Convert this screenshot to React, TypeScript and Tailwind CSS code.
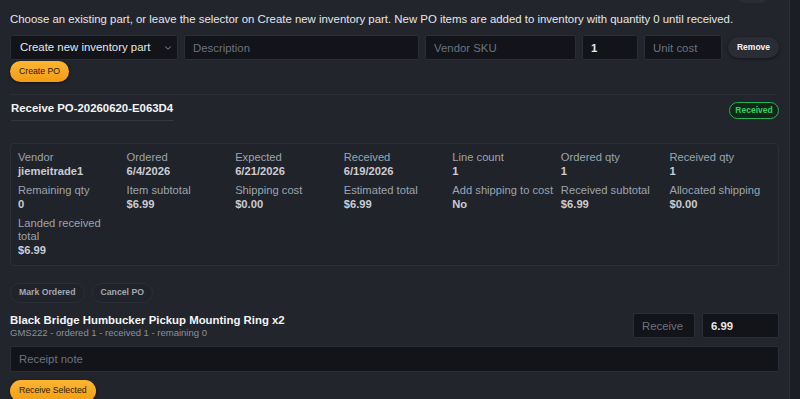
import { ChevronDown } from 'lucide-react';

const fields: { label: string; value: string }[] = [
  { label: 'Vendor', value: 'jiemeitrade1' },
  { label: 'Ordered', value: '6/4/2026' },
  { label: 'Expected', value: '6/21/2026' },
  { label: 'Received', value: '6/19/2026' },
  { label: 'Line count', value: '1' },
  { label: 'Ordered qty', value: '1' },
  { label: 'Received qty', value: '1' },
  { label: 'Remaining qty', value: '0' },
  { label: 'Item subtotal', value: '$6.99' },
  { label: 'Shipping cost', value: '$0.00' },
  { label: 'Estimated total', value: '$6.99' },
  { label: 'Add shipping to cost', value: 'No' },
  { label: 'Received subtotal', value: '$6.99' },
  { label: 'Allocated shipping', value: '$0.00' },
  { label: 'Landed received total', value: '$6.99' },
];

const inputCls =
  'h-[25px] rounded-[2px] border border-[#2b2e36] bg-[#121419] px-[8px] text-[11.4px] text-[#e5e7eb] placeholder:text-[#6b7280] outline-none';

function Pill({ children }: { children: React.ReactNode }) {
  return (
    <button className="flex h-[20px] items-center rounded-full border border-[#2c2f37] bg-[#20232a] px-[8px] text-[8.7px] font-bold text-[#a3a8b3]">
      {children}
    </button>
  );
}

function OrangeButton({ children, className = '' }: { children: React.ReactNode; className?: string }) {
  return (
    <button
      className={`flex items-center rounded-full bg-gradient-to-b from-[#fbb631] to-[#f39c12] px-[9px] text-[8.7px] font-medium text-[#2a1a00] shadow-[0_1px_3px_rgba(0,0,0,0.5)] ${className}`}
    >
      {children}
    </button>
  );
}

export default function App() {
  return (
    <div className="flex h-[399px] w-[800px] overflow-hidden bg-[#1b1e24] font-['Liberation_Sans',Arial,sans-serif]">
      <div className="w-[790px] shrink-0 border-r border-[#2e3139] bg-[#22252c] px-[10px]">
        <div className="flex justify-end">
          <div className="-mt-[19px] mr-[8px] h-[22px] w-[36px] rounded-full bg-[#2a2d35]" />
        </div>

        <p className="mt-[9px] text-[11.4px] leading-[15px] text-[#e5e7eb]">
          Choose an existing part, or leave the selector on Create new inventory part. New PO items are added to
          inventory with quantity 0 until received.
        </p>

        <div className="mt-[8px] flex gap-[6px]">
          <div className={`${inputCls} flex w-[168px] items-center justify-between pl-[9px] pr-[4px]`}>
            <span>Create new inventory part</span>
            <ChevronDown size={10} className="text-[#9ca3af]" />
          </div>
          <input className={`${inputCls} w-[235px]`} placeholder="Description" />
          <input className={`${inputCls} w-[151px]`} placeholder="Vendor SKU" />
          <input className={`${inputCls} w-[56px] font-bold`} defaultValue="1" />
          <input className={`${inputCls} w-[78px]`} placeholder="Unit cost" />
          <button className="my-[2px] h-[21px] flex-1 rounded-full bg-[#2a2d35] text-[8.5px] font-bold text-[#f3f4f6] shadow-[0_1px_3px_rgba(0,0,0,0.5)]">
            Remove
          </button>
        </div>

        <OrangeButton className="mt-[1px] h-[21px]">Create PO</OrangeButton>

        <div className="mr-[2px] mt-[12px] border-t border-[#2c2f37]" />

        <div className="mt-[6px] flex items-start justify-between">
          <h3 className="ml-[1px] border-b border-[#34373f] pb-[4px] pr-[1px] text-[11.4px] font-bold leading-[15px] text-[#f3f4f6]">
            Receive PO-20260620-E063D4
          </h3>
          <span className="mt-[1px] flex h-[17px] w-[50px] items-center justify-center rounded-full border-[1.5px] border-[#22b455] bg-[#13261a] text-[8.5px] font-bold text-[#2fd35f]">
            Received
          </span>
        </div>

        <div className="mt-[22px] rounded-[4px] border border-[#2c2f37] bg-[#20232a] pb-[8px] pl-[7px] pt-[7px]">
          <div className="grid grid-cols-7 gap-y-[6px]">
            {fields.map((f) => (
              <div key={f.label} className="pr-[4px]">
                <div className="text-[11.2px] leading-[13px] text-[#9ca3af]">{f.label}</div>
                <div className="text-[11.2px] font-bold leading-[14px] text-[#c9ccd2]">{f.value}</div>
              </div>
            ))}
          </div>
        </div>

        <div className="mt-[17px] flex gap-[7px]">
          <Pill>Mark Ordered</Pill>
          <Pill>Cancel PO</Pill>
        </div>

        <div className="mt-[10px] flex items-start justify-between">
          <div>
            <div className="text-[11.4px] font-bold leading-[14px] text-[#f3f4f6]">
              Black Bridge Humbucker Pickup Mounting Ring x2
            </div>
            <div className="text-[9.5px] leading-[11px] text-[#8b909b]">
              GMS222 - ordered 1 - received 1 - remaining 0
            </div>
          </div>
          <div className="flex gap-[7px]">
            <input className={`${inputCls} w-[62px] bg-[#1a1d23] px-[5px]`} placeholder="Receive" />
            <input className={`${inputCls} w-[77px] px-[5px] font-bold`} defaultValue="6.99" />
          </div>
        </div>

        <input className={`${inputCls} mt-[8px] h-[26px] w-full`} placeholder="Receipt note" />

        <OrangeButton className="mt-[8px] h-[22px]">Receive Selected</OrangeButton>
      </div>
      <div className="flex-1" />
    </div>
  );
}
